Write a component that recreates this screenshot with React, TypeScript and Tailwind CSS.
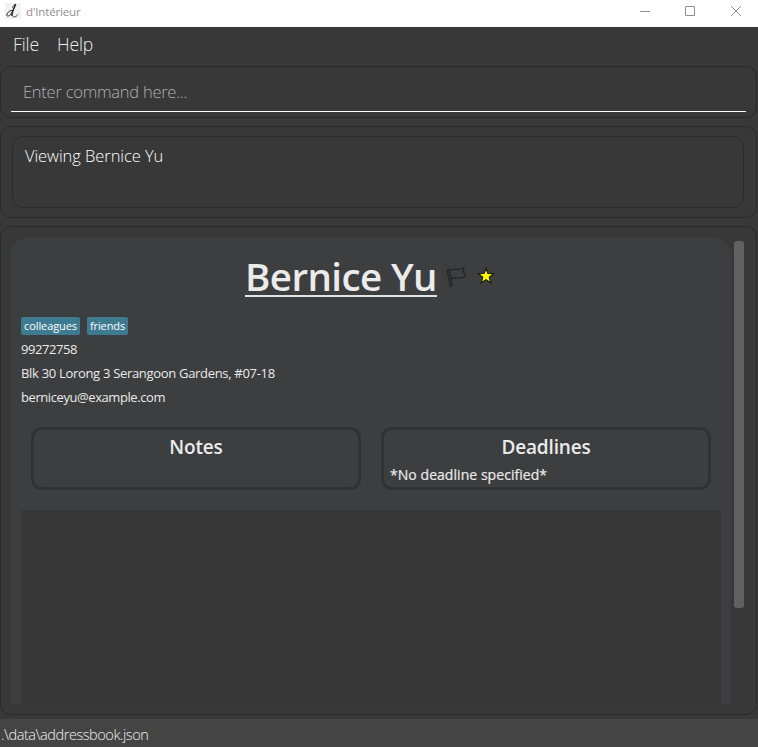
import React from "react";

function WindowControls() {
  return (
    <svg width="104" height="27" viewBox="0 0 104 27" fill="none" stroke="#8e8e8e" className="shrink-0">
      <path d="M0 11.5h10" />
      <rect x="45.5" y="6.5" width="9" height="9" rx="0.5" />
      <path d="M91 6l10 10M101 6l-10 10" />
    </svg>
  );
}

function TitleBar() {
  return (
    <header className="flex h-[27px] items-start bg-white pl-[5px] pr-[14px]">
      <svg width="16" height="16" viewBox="0 0 16 16" className="mt-[3px] shrink-0">
        <rect width="16" height="16" fill="#f2f2f2" />
        <g fill="none" stroke="#222" strokeLinecap="round">
          <path d="M7.600 7.600C5.800 6.400 2.200 9.400 1.800 11.800c-.2 1.900 2 1.500 3.300.2 1.300-1.300 2.200-3 2.900-4.600" strokeWidth="1" />
          <path d="M10.600 1.600C9 4.800 6.700 9.700 7 12.300" strokeWidth="1.400" />
          <path d="M10.400 1.400c-1.500.1-2.500 1.800-2.800 3M7 12.300c.5 2.400 4 2.200 5.700-.6" strokeWidth=".8" />
        </g>
      </svg>
      <span className="ml-[5px] mt-[4px] grow text-[11.5px] leading-4 tracking-[-0.15px] text-[#8f8f8f]">d'Intérieur</span>
      <WindowControls />
    </header>
  );
}

function Panel({ className, children }: { className: string; children: React.ReactNode }) {
  return <section className={"mr-px rounded-[11px] border border-[#2b2b2b] " + className}>{children}</section>;
}

function InfoBox({ title, children }: { title: string; children?: React.ReactNode }) {
  return (
    <div className="h-[63px] w-[330px] rounded-[11px] border-[3px] border-[#323232] px-[6px] pt-1">
      <h2 className="text-center text-[19px] font-semibold leading-[26px] tracking-[-0.18px]">{title}</h2>
      <p className="mt-[5px] text-[14px] font-medium leading-5 tracking-[0.05px] [-webkit-text-stroke:0.2px_#ebebeb]">{children}</p>
    </div>
  );
}

function Flag() {
  return (
    <svg width="22" height="22" viewBox="0 0 22 22" fill="none" stroke="#222324" strokeWidth="1.2" strokeLinejoin="round">
      <path d="M1.200 4.200l1.500-.8.8 1.200c3.200-2.600 6.500-.6 9.500-1.300 2-.4 3.500-1.700 5-1.500l-.6 4.500 2.400 2.600c-1.500 3.500-4.500 3.300-7.500 3-3-.3-5-.2-7 1l.9 6.500-1.900.7z" />
      <path d="M3.500 4.600l1.900 8.400" />
    </svg>
  );
}

function Star() {
  return (
    <svg width="18" height="18" viewBox="0 0 18 18">
      <path
        d="M9 1.200l1.900 5.200 5.700.2-4.300 3.600 1.500 5.500L9 12.700l-4.800 3 1.500-5.500L1.400 6.600l5.700-.2z"
        fill="#ffff00"
        stroke="#1c1c10"
        strokeWidth="1.2"
      />
    </svg>
  );
}

function Tag({ children, className }: { children: string; className: string }) {
  return (
    <span className={"flex h-[18px] items-center justify-center rounded-[2px] bg-[#3e7b91] text-[11px] tracking-[-0.1px] text-white " + className}>
      {children}
    </span>
  );
}

function PersonCard() {
  return (
    <article className="h-[467px] w-[721px] overflow-hidden rounded-t-[20px] bg-[#3c3e3f] pl-[11px] pr-[10px] text-[#ebebeb]">
      <div className="flex h-[80px] items-start pl-[224px] pt-[13px]">
        <h1 className="flex h-[47px] w-[192px] justify-center whitespace-nowrap border-b-2 border-[#dfe3e3] text-[38.5px] font-semibold leading-[53px] tracking-[-0.6px]">
          Bernice Yu
        </h1>
        <span className="ml-[9px] mt-[16px]"><Flag /></span>
        <span className="ml-[9px] mt-[17px]"><Star /></span>
      </div>
      <div className="flex gap-[7px]">
        <Tag className="w-[59px]">colleagues</Tag>
        <Tag className="w-[41px]">friends</Tag>
      </div>
      <div className="mt-[2px] text-[13px] leading-6">
        <p className="tracking-[-0.45px]">99272758</p>
        <p className="tracking-[-0.31px]">Blk 30 Lorong 3 Serangoon Gardens, #07-18</p>
        <p className="tracking-[-0.42px]">berniceyu@example.com</p>
      </div>
      <div className="mt-[18px] flex gap-5 pl-[10px]">
        <InfoBox title="Notes" />
        <InfoBox title="Deadlines">*No deadline specified*</InfoBox>
      </div>
      <div className="mt-5 h-[194px] bg-[#373737]" />
    </article>
  );
}

export default function App() {
  return (
    <div className="flex h-[747px] w-[758px] flex-col overflow-hidden bg-[#383838] font-['Open_Sans','Noto_Sans',sans-serif]">
      <TitleBar />
      <nav className="flex h-[39px] gap-[18px] pl-[13px] pt-[4px] text-[17.5px] font-light leading-[26px] tracking-[-0.1px] text-[#ededed]">
        <span>File</span>
        <span>Help</span>
      </nav>
      <Panel className="h-[52px] px-[10px]">
        <div className="h-[45px] border-b border-white pl-[12px] pt-[12px] text-[16.5px] font-light leading-[26px] tracking-[-0.25px] text-[#b0b0b0]">
          Enter command here...
        </div>
      </Panel>
      <Panel className="mt-2 h-[92px] px-[11px] pt-[9px]">
        <div className="mr-px h-[72px] rounded-[10px] border border-[#2b2b2b] pl-[12px] pt-[6px] text-[16.5px] font-light leading-[26px] tracking-[-0.07px] text-white">
          Viewing Bernice Yu
        </div>
      </Panel>
      <Panel className="mt-2 flex h-[489px] items-start gap-[3px] pl-[9px] pt-[10px]">
        <PersonCard />
        <div className="mt-1 h-[367px] w-[10px] rounded-[3px] bg-[#616161]" />
      </Panel>
      <footer className="mt-1 h-[28px] bg-[#444444] pl-px pt-[4px] text-[14.5px] font-light leading-6 tracking-[-0.44px] text-[#f0f0f0]">
        .\data\addressbook.json
      </footer>
    </div>
  );
}
